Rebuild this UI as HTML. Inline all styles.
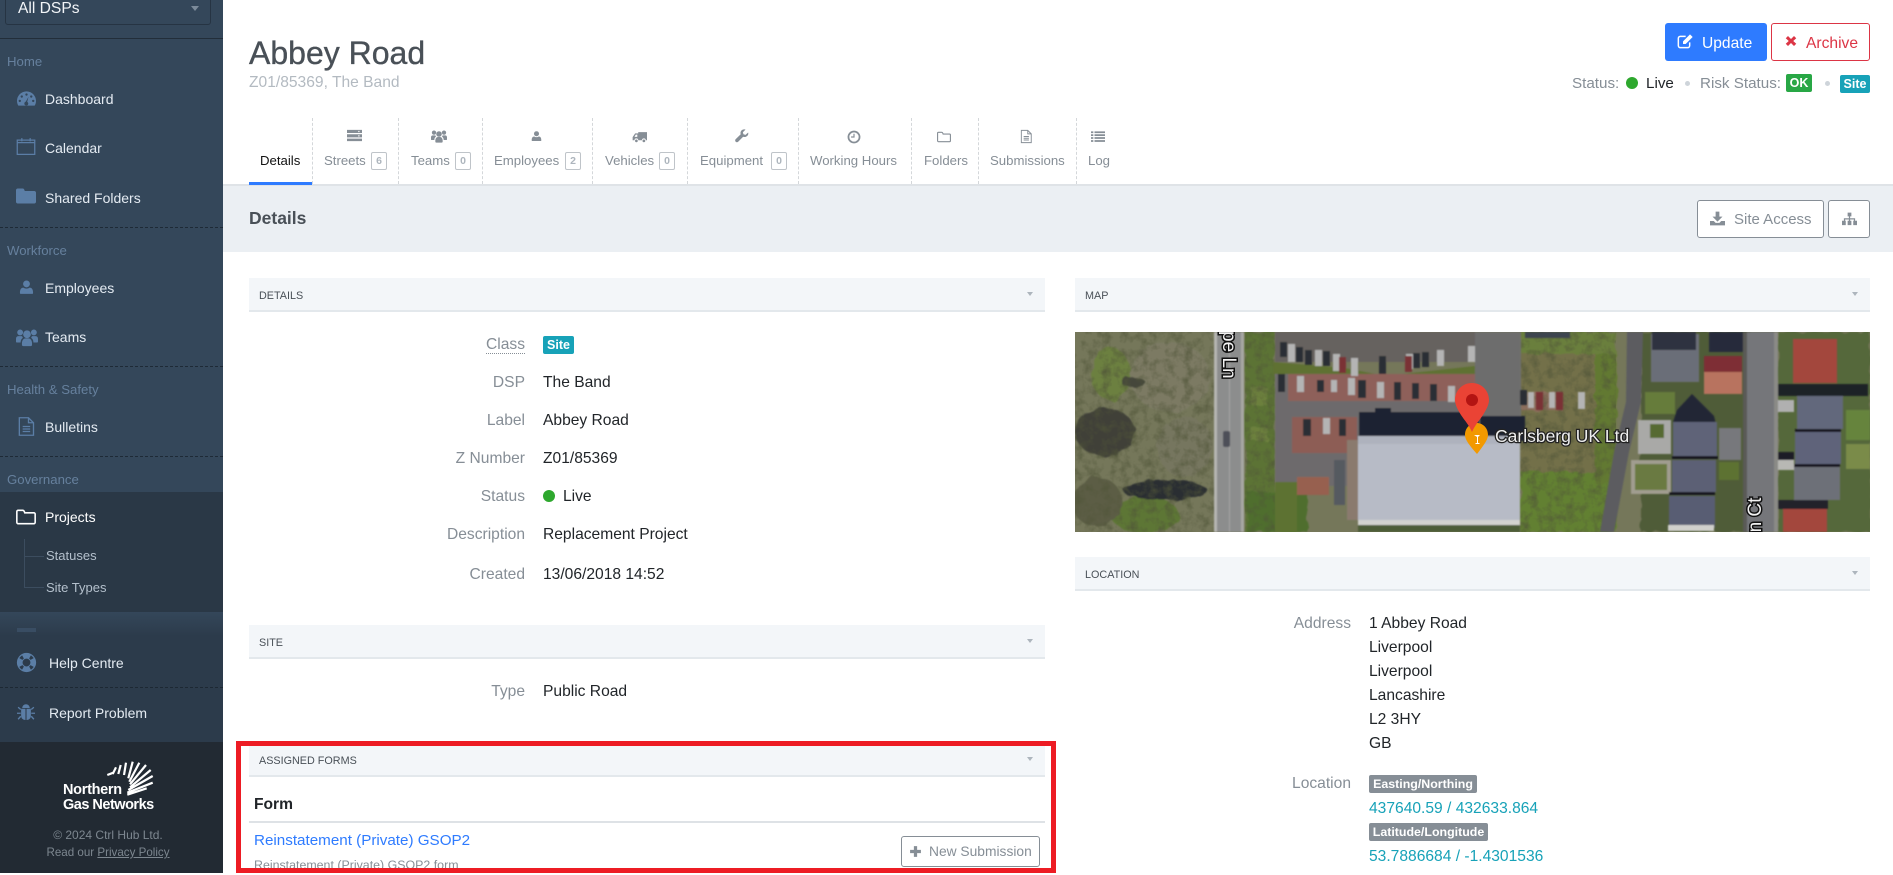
<!DOCTYPE html>
<html lang="en"><head><meta charset="utf-8"><title>Abbey Road</title>
<style>
*{box-sizing:border-box}
html,body{margin:0;padding:0;width:1893px;height:873px;overflow:hidden;background:#fff;font-family:"Liberation Sans",sans-serif}
.t{position:absolute;white-space:nowrap;line-height:20px;height:20px}
.a{position:absolute}
#side{position:absolute;left:0;top:0;width:223px;height:873px;background:#34475a;overflow:hidden}
.sec{color:#66809d;font-size:13.2px;left:7px}
.mi{color:#e4ebf2;font-size:14px;left:45px}
.sub{color:#b4c0cc;font-size:13px;left:46px}
.si{position:absolute;fill:#5b7ea6}
.dash{position:absolute;left:0;width:223px;border-top:1px dashed #1e2a36}
.tab{font-size:13.2px;color:#868e96;top:151px}
.cnt{position:absolute;top:152px;width:16px;height:18px;border:1px solid #bfc4c9;border-radius:2px;font-size:10.5px;font-weight:bold;color:#adb5bd;text-align:center;line-height:16px}
.sep{position:absolute;top:118px;height:66px;border-left:1px dashed #d4d7da}
.ti{position:absolute;fill:#868e96}
.ph{position:absolute;height:34px;background:#f3f6f9;border-bottom:2px solid #e3e8ec;font-size:10.8px;color:#495057;line-height:36px;padding-left:10px}
.ph i{position:absolute;right:12px;top:14px;width:0;height:0;border:3.500px solid transparent;border-top:4.500px solid #adb5bd;border-bottom:0}
.l{font-size:15.6px;color:#868e96;text-align:right}
.v{font-size:15.6px;color:#212529}
.bd{position:absolute;color:#fff;font-weight:bold;border-radius:2px;text-align:center}
.btn{position:absolute;border-radius:3px;font-size:15.6px;line-height:36px;height:38px}
</style></head><body>
<svg width="0" height="0" style="position:absolute"><defs>
<symbol id="gauge" viewBox="0 0 24 24"><path fill-rule="evenodd" d="M12 3C5.4 3 0 8.4 0 15c0 2.3.6 4.3 1.700 6h20.600c1.100-1.700 1.700-3.700 1.700-6C24 8.400 18.600 3 12 3zM12 5.500a1.500 1.500 0 1 1 0 3 1.500 1.500 0 0 1 0-3zM6 8a1.500 1.500 0 1 1 0 3 1.500 1.500 0 0 1 0-3zM18 8a1.500 1.500 0 1 1 0 3 1.500 1.500 0 0 1 0-3zM3.500 13.500a1.500 1.500 0 1 1 0 3 1.500 1.500 0 0 1 0-3zM20.500 13.500a1.500 1.500 0 1 1 0 3 1.500 1.500 0 0 1 0-3zM14.500 10l-1.600 6.200a2.500 2.500 0 1 1-1.800-.2z"/></symbol>
<symbol id="cal" viewBox="0 0 24 24"><path fill="none" stroke="currentColor" stroke-width="1.500" d="M1.500 5h21v17h-21zM1.500 8h21M7 2.500v4M17 2.500v4"/></symbol>
<symbol id="folder" viewBox="0 0 24 24"><path d="M2 3h6c1 0 1.500.5 2 1.500L10.500 6H22c1 0 2 1 2 2v11c0 1-1 2-2 2H2c-1 0-2-1-2-2V5c0-1 1-2 2-2z"/></symbol>
<symbol id="folderO" viewBox="0 0 24 24"><path fill="none" stroke="currentColor" stroke-width="1.900" d="M2.500 4h5.500c1 0 1.500.5 2 1.500l.5 1.500h11c.8 0 1.500.7 1.500 1.500v10c0 .8-.7 1.500-1.500 1.500h-19c-.8 0-1.500-.7-1.500-1.500v-13c0-.8.700-1.500 1.500-1.500z"/></symbol>
<symbol id="user" viewBox="0 0 24 24"><circle cx="12" cy="7" r="5.500"/><path d="M3 23c-1 0-1.500-.6-1.500-1.500 0-5 1.500-8.500 5.500-8.500 1.500 1 3 1.500 5 1.500s3.500-.5 5-1.500c4 0 5.500 3.500 5.500 8.500 0 .9-.5 1.500-1.500 1.500z"/></symbol>
<symbol id="users" viewBox="0 0 24 24"><circle cx="4.500" cy="7" r="3.200"/><circle cx="19.500" cy="7" r="3.200"/><circle cx="12" cy="9" r="4.200"/><path d="M0 17v-3c0-2 1-3 3-3h3c1 0 1 1 1.500 2-1.500 1-2.500 2.500-2.500 5H1c-.6 0-1-.4-1-1zM24 17v-3c0-2-1-3-3-3h-3c-1 0-1 1-1.500 2 1.500 1 2.500 2.500 2.500 5h4c.6 0 1-.4 1-1zM6.500 19c0-3 1.500-5.500 4-5.500h3c2.500 0 4 2.500 4 5.500v1.500c0 1-.5 1.500-1.500 1.500H8c-1 0-1.500-.5-1.500-1.500z"/></symbol>
<symbol id="file" viewBox="0 0 24 24"><path fill="none" stroke="currentColor" stroke-width="1.600" d="M4 1.500h11l6 6V22.500H4zM15 1.500v6h6M8 12h9M8 15h9M8 18h9"/></symbol>
<symbol id="ring" viewBox="0 0 24 24"><path fill-rule="evenodd" d="M12 1a11 11 0 1 0 0 22 11 11 0 0 0 0-22zM12 7.500a4.500 4.500 0 1 1 0 9 4.500 4.500 0 0 1 0-9zM7 3.800l2 3.600c-.7.500-1.200 1-1.600 1.600L3.800 7c.8-1.300 1.900-2.400 3.200-3.200zM17 3.800c1.300.8 2.400 1.900 3.200 3.200l-3.600 2c-.4-.6-.9-1.100-1.600-1.600zM3.800 17l3.600-2c.4.600.9 1.100 1.600 1.600l-2 3.600c-1.300-.8-2.400-1.900-3.200-3.200zM20.200 17c-.8 1.300-1.900 2.400-3.200 3.200l-2-3.600c.7-.5 1.200-1 1.600-1.600z"/></symbol>
<symbol id="bug" viewBox="0 0 24 24"><path d="M7 6c0-3 2.500-5 5-5s5 2 5 5zM5.500 7h5.800v15c-3 0-5.800-2-5.800-5.500zM18.500 7h-5.800v15c3 0 5.800-2 5.800-5.500z"/><path stroke="currentColor" stroke-width="1.800" fill="none" d="M5 8L1.500 5M19 8l3.500-3M5 13H0M19 13h5M5 17l-3.500 4M19 17l3.500 4"/></symbol>
<symbol id="server" viewBox="0 0 24 24"><path fill-rule="evenodd" d="M0 3h24v5H0zM0 10h24v5H0zM0 17h24v4H0zM18 4.500v2h2v-2zM18 11.500v2h2v-2z"/></symbol>
<symbol id="truck" viewBox="0 0 24 24"><path d="M10 5h14v13h-2a3 3 0 0 0-6 0h-6a3 3 0 0 0-6 0H1v-5l4-6h5zM4 12.500h4.500V9H6z"/><circle cx="7" cy="19" r="2.200"/><circle cx="19" cy="19" r="2.200"/></symbol>
<symbol id="wrench" viewBox="0 0 24 24"><path d="M22.500 6l-4.500 4-3.500-1-1-3.500L18 1c-3-1-6.500 0-8 3-.8 1.700-.8 3.300-.2 5L1 17.500C0 18.700 0 20.500 1.200 21.800s3 1.200 4.200 0L14 13.200c1.700.8 3.500.7 5.200-.2 3-1.500 4.200-4 3.300-7z"/></symbol>
<symbol id="clock" viewBox="0 0 24 24"><path fill-rule="evenodd" d="M12 1a11 11 0 1 0 0 22 11 11 0 0 0 0-22zM12 4a8 8 0 1 1 0 16 8 8 0 0 1 0-16zM11 6.500h2V13H7v-2h4z"/></symbol>
<symbol id="list" viewBox="0 0 24 24"><path d="M0 4h4v3H0zM6 4h18v3H6zM0 9h4v3H0zM6 9h18v3H6zM0 14h4v3H0zM6 14h18v3H6zM0 19h4v3H0zM6 19h18v3H6z"/></symbol>
<symbol id="edit" viewBox="0 0 24 24"><path fill="none" stroke="currentColor" stroke-width="2.200" d="M19 14v5c0 1.700-1.300 3-3 3H5c-1.700 0-3-1.300-3-3V8c0-1.700 1.300-3 3-3h8"/><path d="M9 12.500L19.500 2l4 4L13 16.500H9zM9 12.500" fill="currentColor"/></symbol>
<symbol id="x" viewBox="0 0 24 24"><path d="M6 2l6 6 6-6 4.500 4.500-6 5.500 6 5.500L18 22l-6-6-6 6-4.500-4.500 6-5.500-6-5.500z"/></symbol>
<symbol id="down" viewBox="0 0 24 24"><path d="M9 1h6v8h5l-8 8-8-8h5zM0 16h6l3 3h6l3-3h6v7H0z"/></symbol>
<symbol id="map" viewBox="0 0 24 24"><path d="M9 1h6v6h-2v3h8v4h3v7h-6v-7h1v-2h-6v2h2v7H9v-7h2v-2H5v2h1v7H0v-7h3v-4h8V7H9z"/></symbol>
<symbol id="plus" viewBox="0 0 24 24"><path d="M9 2h6v7h7v6h-7v7H9v-7H2V9h7z"/></symbol>
<filter id="soft" x="-5%" y="-5%" width="110%" height="110%"><feTurbulence type="fractalNoise" baseFrequency=".09" numOctaves="2" seed="4" result="n"/><feDisplacementMap in="SourceGraphic" in2="n" scale="7" result="d"/><feGaussianBlur in="d" stdDeviation="0.9"/></filter>
<filter id="soft2"><feGaussianBlur stdDeviation="0.9"/></filter>
<filter id="noise" x="0" y="0" width="100%" height="100%"><feTurbulence type="fractalNoise" baseFrequency=".11" numOctaves="3" seed="9"/><feColorMatrix values="0 0 0 0 .08  0 0 0 0 .09  0 0 0 0 .04  0 0 0 1.500 -.62"/></filter>
</defs></svg>

<div id="side">
  <div class="a" style="left:5px;top:-14px;width:206px;height:39px;border:1px solid #263443;border-radius:3px"></div>
  <div class="t" style="left:18px;top:-1px;color:#f2f5f8;font-size:15.6px">All DSPs</div>
  <div class="a" style="left:191px;top:6px;border:4px solid transparent;border-top:5px solid #7c8b9a;border-bottom:0"></div>
  <div class="a" style="left:0;top:38px;width:223px;height:1px;background:#222e3a"></div>

  <div class="t sec" style="top:52px">Home</div>
  <svg class="si" style="left:17px;top:89px" width="19" height="19"><use href="#gauge"/></svg><div class="t mi" style="top:89px">Dashboard</div>
  <svg class="si" style="left:16px;top:136px;color:#5b7ea6" width="20" height="20"><use href="#cal"/></svg><div class="t mi" style="top:138px">Calendar</div>
  <svg class="si" style="left:16px;top:186px" width="20" height="20"><use href="#folder"/></svg><div class="t mi" style="top:188px">Shared Folders</div>
  <div class="dash" style="top:227px"></div>
  <div class="t sec" style="top:241px">Workforce</div>
  <svg class="si" style="left:19px;top:278px" width="15" height="18"><use href="#user"/></svg><div class="t mi" style="top:278px">Employees</div>
  <svg class="si" style="left:16px;top:326px" width="22" height="22"><use href="#users"/></svg><div class="t mi" style="top:327px">Teams</div>
  <div class="dash" style="top:366px"></div>
  <div class="t sec" style="top:380px">Health &amp; Safety</div>
  <svg class="si" style="left:16px;top:416px;color:#5b7ea6" width="20" height="21"><use href="#file"/></svg><div class="t mi" style="top:417px">Bulletins</div>
  <div class="dash" style="top:456px"></div>
  <div class="t sec" style="top:470px">Governance</div>

  <div class="a" style="left:0;top:492px;width:223px;height:120px;background:#2a3846"></div>
  <svg class="a" style="left:16px;top:507px;color:#fff" width="20" height="20"><use href="#folderO"/></svg><div class="t mi" style="top:507px;color:#fff">Projects</div>
  <div class="a" style="left:24px;top:539px;width:1px;height:49px;background:#3c4d5f"></div>
  <div class="a" style="left:24px;top:556px;width:20px;height:1px;background:#3c4d5f"></div>
  <div class="a" style="left:24px;top:587px;width:20px;height:1px;background:#3c4d5f"></div>
  <div class="t sub" style="top:546px">Statuses</div>
  <div class="t sub" style="top:578px">Site Types</div>

  <div class="a" style="left:0;top:612px;width:223px;height:130px;background:linear-gradient(#34475a 0,#2c3b4b 24px,#2c3b4b 100%)"></div>
  <div class="a" style="left:17px;top:628px;width:19px;height:4px;background:#394d63"></div>
  <svg class="si" style="left:16px;top:652px" width="21" height="21"><use href="#ring"/></svg><div class="t mi" style="left:49px;top:653px">Help Centre</div>
  <div class="dash" style="top:687px;border-color:#1d2833"></div>
  <svg class="si" style="left:17px;top:703px;color:#5b7ea6" width="18" height="19"><use href="#bug"/></svg><div class="t mi" style="left:49px;top:703px">Report Problem</div>

  <div class="a" style="left:0;top:742px;width:223px;height:131px;background:#222a33"></div>
  <svg class="a" style="left:100px;top:755px" width="60" height="50" fill="none" stroke="#fff" stroke-width="2.200">
    <path d="M7.300 20L13.300 17.700M12.700 19L16 12.300M18.300 19L20.700 10M24 20L26 7.700M28.300 23.300L32.700 6.700M29.300 26.700L39.300 7.700M30 29.300L46 10M30 32.300L50.700 15M28.300 35L52.700 21M27.300 37.700L52.700 27.700M27.300 39.700L46.700 33.300"/>
  </svg>
  <div class="t" style="left:63px;top:780px;color:#fff;font-size:14.5px;font-weight:bold;letter-spacing:-.3px">Northern</div>
  <div class="t" style="left:63px;top:795px;color:#fff;font-size:14.5px;font-weight:bold;letter-spacing:-.5px">Gas Networks</div>
  <div class="t" style="left:0;width:216px;text-align:center;top:825px;color:#7d8790;font-size:12px">© 2024 Ctrl Hub Ltd.</div>
  <div class="t" style="left:0;width:216px;text-align:center;top:843px;color:#7d8790;font-size:11.600px">Read our <span style="text-decoration:underline">Privacy Policy</span></div>
</div>

<!-- header -->
<div class="t" style="left:249px;top:35px;height:36px;line-height:36px;font-size:32px;color:#495057;-webkit-text-stroke:.35px #495057">Abbey Road</div>
<div class="t" style="left:249px;top:73px;font-size:15.600px;color:#b3bac1">Z01/85369, The Band</div>

<div class="btn" style="left:1665px;top:23px;width:102px;background:#2e7bff;color:#fff;padding-left:37px;line-height:41px"><svg class="a" style="left:12px;top:10px;color:#fff;fill:#fff" width="16" height="16"><use href="#edit"/></svg>Update</div>
<div class="btn" style="left:1771px;top:23px;width:99px;background:#fff;border:1px solid #dc3545;color:#dc3545;padding-left:34px;line-height:39px"><svg class="a" style="left:13px;top:11px;fill:#dc3545" width="12" height="12"><use href="#x"/></svg>Archive</div>

<div class="t" style="left:1572px;top:74px;font-size:15.200px;color:#868e96">Status:</div>
<div class="a" style="left:1626px;top:77px;width:12px;height:12px;border-radius:50%;background:#2ea82e"></div>
<div class="t" style="left:1646px;top:74px;font-size:15.200px;color:#212529">Live</div>
<div class="a" style="left:1685px;top:81px;width:5px;height:5px;border-radius:50%;background:#ced4da"></div>
<div class="t" style="left:1700px;top:74px;font-size:15.200px;color:#868e96">Risk Status:</div>
<div class="bd" style="left:1786px;top:74px;width:26px;height:18px;background:#28a745;font-size:12.500px;line-height:18px">OK</div>
<div class="a" style="left:1825px;top:81px;width:5px;height:5px;border-radius:50%;background:#ced4da"></div>
<div class="bd" style="left:1840px;top:75px;width:30px;height:18px;background:#17a2b8;font-size:12.500px;line-height:19px">Site</div>

<!-- tabs -->
<div class="sep" style="left:312px"></div><div class="sep" style="left:398px"></div><div class="sep" style="left:482px"></div><div class="sep" style="left:592px"></div><div class="sep" style="left:687px"></div><div class="sep" style="left:798px"></div><div class="sep" style="left:911px"></div><div class="sep" style="left:978px"></div><div class="sep" style="left:1076px"></div>
<div class="t tab" style="left:260px;color:#111">Details</div>
<svg class="ti" style="left:347px;top:128px" width="15" height="15"><use href="#server"/></svg>
<div class="t tab" style="left:324px">Streets</div><div class="cnt" style="left:371px">6</div>
<svg class="ti" style="left:431px;top:128px" width="16" height="16"><use href="#users"/></svg>
<div class="t tab" style="left:411px">Teams</div><div class="cnt" style="left:455px">0</div>
<svg class="ti" style="left:531px;top:129px" width="11" height="14"><use href="#user"/></svg>
<div class="t tab" style="left:494px">Employees</div><div class="cnt" style="left:565px">2</div>
<svg class="ti" style="left:632px;top:129px" width="15" height="15"><use href="#truck"/></svg>
<div class="t tab" style="left:605px">Vehicles</div><div class="cnt" style="left:659px">0</div>
<svg class="ti" style="left:735px;top:129px" width="14" height="14"><use href="#wrench"/></svg>
<div class="t tab" style="left:700px">Equipment</div><div class="cnt" style="left:771px">0</div>
<svg class="ti" style="left:847px;top:130px" width="14" height="14"><use href="#clock"/></svg>
<div class="t tab" style="left:810px">Working Hours</div>
<svg class="a" style="left:937px;top:130px;color:#868e96" width="14" height="14"><use href="#folderO"/></svg>
<div class="t tab" style="left:924px">Folders</div>
<svg class="a" style="left:1019px;top:129px;color:#868e96" width="14" height="15"><use href="#file"/></svg>
<div class="t tab" style="left:990px">Submissions</div>
<svg class="ti" style="left:1091px;top:129px" width="14" height="14"><use href="#list"/></svg>
<div class="t tab" style="left:1088px">Log</div>

<div class="a" style="left:223px;top:184px;width:1670px;height:2px;background:#dfe3e7"></div>
<div class="a" style="left:249px;top:182px;width:63px;height:3px;background:#2e7bff"></div>
<div class="a" style="left:223px;top:186px;width:1670px;height:66px;background:#ebeff3"></div>
<div class="t" style="left:249px;top:208px;font-size:17.500px;font-weight:bold;color:#495057">Details</div>
<div class="btn" style="left:1697px;top:200px;width:127px;background:#fff;border:1px solid #868e96;color:#868e96;padding-left:36px;font-size:15px;line-height:37px"><svg class="ti" style="left:12px;top:10px" width="15" height="15"><use href="#down"/></svg>Site Access</div>
<div class="btn" style="left:1828px;top:200px;width:42px;background:#fff;border:1px solid #868e96"><svg class="ti" style="left:12px;top:11px" width="17" height="15"><use href="#map"/></svg></div>

<!-- details panel -->
<div class="ph" style="left:249px;top:278px;width:796px">DETAILS<i></i></div>
<div class="t l" style="right:1368px;top:335px;border-bottom:0"><span style="border-bottom:1px dotted #868e96">Class</span></div>
<div class="bd" style="left:543px;top:336px;width:31px;height:18px;background:#17a2b8;font-size:12.500px;line-height:19px">Site</div>
<div class="t l" style="right:1368px;top:373px">DSP</div><div class="t v" style="left:543px;top:373px">The Band</div>
<div class="t l" style="right:1368px;top:411px">Label</div><div class="t v" style="left:543px;top:411px">Abbey Road</div>
<div class="t l" style="right:1368px;top:449px">Z Number</div><div class="t v" style="left:543px;top:449px">Z01/85369</div>
<div class="t l" style="right:1368px;top:487px">Status</div><div class="a" style="left:543px;top:490px;width:12px;height:12px;border-radius:50%;background:#2ea82e"></div><div class="t v" style="left:563px;top:487px">Live</div>
<div class="t l" style="right:1368px;top:525px">Description</div><div class="t v" style="left:543px;top:525px">Replacement Project</div>
<div class="t l" style="right:1368px;top:565px">Created</div><div class="t v" style="left:543px;top:565px">13/06/2018 14:52</div>

<div class="ph" style="left:249px;top:625px;width:796px">SITE<i></i></div>
<div class="t l" style="right:1368px;top:682px">Type</div><div class="t v" style="left:543px;top:682px">Public Road</div>

<!-- assigned forms -->
<div class="ph" style="left:249px;top:743px;width:796px">ASSIGNED FORMS<i></i></div>
<div class="t" style="left:254px;top:795px;font-size:15.600px;font-weight:bold;color:#212529">Form</div>
<div class="a" style="left:249px;top:821px;width:796px;height:2px;background:#dee2e6"></div>
<div class="t" style="left:254px;top:831px;font-size:15.200px;color:#2e7bff">Reinstatement (Private) GSOP2</div>
<div class="t" style="left:254px;top:855px;font-size:12.400px;color:#868e96">Reinstatement (Private) GSOP2 form</div>
<div class="a" style="left:901px;top:836px;width:139px;height:31px;background:#fff;border:1px solid #868e96;border-radius:3px"></div>
<svg class="ti" style="left:909px;top:845px" width="13" height="13"><use href="#plus"/></svg>
<div class="t" style="left:929px;top:842px;font-size:13.800px;color:#868e96">New Submission</div>
<div class="a" style="left:236px;top:741px;width:820px;height:132px;border:5px solid #ed1c24"></div>

<!-- map -->
<div class="ph" style="left:1075px;top:278px;width:795px">MAP<i></i></div>
<svg class="a" style="left:1075px;top:332px" width="795" height="200" viewBox="0 0 795 200">
 <rect width="795" height="200" fill="#75775a"/>
 <g filter="url(#soft)">
  <ellipse cx="30" cy="100" rx="30" ry="24" fill="#3f4037"/>
  <ellipse cx="36" cy="42" rx="20" ry="26" fill="#6c8040"/>
  <ellipse cx="95" cy="45" rx="40" ry="35" fill="#7b7a64"/>
  <ellipse cx="70" cy="183" rx="34" ry="18" fill="#5d7636"/>
  <ellipse cx="90" cy="158" rx="42" ry="10" fill="#2a2f30"/>
  <ellipse cx="22" cy="170" rx="25" ry="25" fill="#5c5d44"/>
  <ellipse cx="58" cy="50" rx="12" ry="5" fill="#44473a"/>
  <ellipse cx="110" cy="115" rx="28" ry="30" fill="#76765f"/>
  <rect x="170" width="30" height="200" fill="#5c7335"/>
  <rect x="176" y="55" width="16" height="18" fill="#6c803e"/>
  <rect x="176" y="95" width="16" height="14" fill="#6c803e"/>
  <rect x="172" y="160" width="60" height="40" fill="#4f6e2e"/>
  <rect x="445" width="96" height="200" fill="#73704a"/><rect x="445" width="96" height="22" fill="#6b7f3d"/><rect x="445" y="140" width="96" height="60" fill="#628030"/><rect x="520" y="22" width="22" height="130" fill="#627932"/><rect x="445" y="60" width="42" height="18" fill="#8b6e5c"/>
  <rect x="566" width="110" height="200" fill="#4f5b37"/>
  <rect x="703" width="92" height="200" fill="#55683a"/>
 </g>
 <rect width="140" height="200" filter="url(#noise)"/>
 <rect x="170" width="30" height="200" filter="url(#noise)"/>
 <rect x="445" width="96" height="200" filter="url(#noise)"/>
 <g filter="url(#soft2)">
  <rect x="139" width="30" height="200" fill="#8c8d8d"/><rect x="139" width="3" height="200" fill="#b6b6b2"/><rect x="166" width="3" height="200" fill="#a8a8a4"/><rect x="154" width="1" height="200" fill="#a4a4a4"/>
  <rect x="148" y="99" width="7" height="16" rx="2" fill="#4d5058"/>
  <rect x="200" y="0" width="202" height="30" fill="#66625f"/>
  <path d="M198 30L270 36L310 44L400 34L400 47L300 47L198 42z" fill="#5f7133"/>
  <rect x="200" y="42" width="205" height="112" fill="#6d6b6c"/>
  <rect x="213" y="42" width="190" height="27" fill="#8e605a"/>
  <rect x="217" y="85" width="65" height="36" fill="#8d5d54"/><rect x="222" y="145" width="32" height="18" fill="#97604f"/>
  <path d="M200 150h22v50h-22z" fill="#5d7232"/>
  <rect x="284" y="80" width="120" height="28" fill="#1d2030"/><rect x="300" y="76" width="16" height="8" fill="#1d2030"/>
  <rect x="272" y="108" width="11" height="80" fill="#8a7a6e"/><rect x="259" y="128" width="11" height="45" fill="#555a60"/>
  <rect x="400" y="0" width="46" height="84" fill="#6d6d6d"/>
  <rect x="405" y="84" width="45" height="25" fill="#1f2030"/>
  <rect x="450" y="0" width="45" height="6" fill="#3e4450"/>
  <path d="M552 0h16l-2 70-12 50-15 80h-14l14-80 12-50z" fill="#5b5c60"/>
  <rect x="576" y="2" width="48" height="48" fill="#6b6e78"/><rect x="577" y="0" width="44" height="18" fill="#2d3240"/>
  <rect x="570" y="60" width="30" height="22" fill="#667b3a"/>
  <rect x="629" y="24" width="38" height="16" fill="#7e2d35"/><rect x="629" y="40" width="38" height="22" fill="#b8735f"/>
  <rect x="634" y="0" width="34" height="20" fill="#25293a"/>
  <rect x="563" y="88" width="33" height="34" fill="#a9a9a7"/><rect x="575" y="92" width="14" height="14" fill="#566b33"/>
  <rect x="556" y="128" width="40" height="34" fill="#a09d90"/><rect x="560" y="132" width="32" height="26" fill="#6a7a42"/>
  <rect x="644" y="96" width="22" height="32" fill="#77787c"/><rect x="644" y="130" width="20" height="18" fill="#5d7230"/>
  <path d="M598 90l4-12 15-16 22 22 2 8z" fill="#202536"/>
  <rect x="598" y="90" width="44" height="34" fill="#5e6378"/><rect x="597" y="124" width="46" height="3" fill="#14171f"/><rect x="597" y="128" width="44" height="32" fill="#5b6075"/><rect x="594" y="160" width="46" height="3" fill="#14171f"/><rect x="594" y="164" width="46" height="32" fill="#585d73"/><rect x="593" y="193" width="46" height="6" fill="#d0d0cc"/>
  <rect x="672" width="27" height="200" fill="#75767a"/><rect x="668" width="4" height="200" fill="#5a5a56"/><rect x="699" width="4" height="200" fill="#8a8a86"/>
  <rect x="703" y="52" width="90" height="12" fill="#1e2028"/>
  <rect x="718" y="7" width="44" height="44" fill="#a3473c"/>
  <rect x="722" y="64" width="46" height="33" fill="#62677c"/><rect x="720" y="97" width="46" height="3" fill="#15181f"/><rect x="720" y="100" width="46" height="32" fill="#5f647a"/><rect x="719" y="132" width="46" height="3" fill="#15181f"/><rect x="719" y="135" width="46" height="33" fill="#6d6f78"/>
  <rect x="771" y="78" width="24" height="30" fill="#66843c"/><rect x="771" y="112" width="24" height="25" fill="#7a8b4a"/>
  <rect x="708" y="177" width="44" height="23" fill="#a3473c"/><rect x="703" y="168" width="50" height="9" fill="#20222a"/>
  <rect x="703" y="68" width="16" height="12" fill="#b0b0b0"/><rect x="703" y="128" width="16" height="10" fill="#b8b8b4"/><rect x="703" y="120" width="16" height="8" fill="#1a1d26"/>
  <g fill="#2c2f35"><rect x="205" y="10" width="7" height="15"/><rect x="221" y="15" width="7" height="15"/><rect x="230" y="18" width="7" height="15"/><rect x="248" y="19" width="7" height="15"/><rect x="304" y="24" width="7" height="18"/><rect x="338" y="21" width="7" height="15"/><rect x="347" y="20" width="7" height="15"/><rect x="203" y="42" width="7" height="18"/><rect x="283" y="48" width="8" height="18"/><rect x="319" y="50" width="7" height="18"/><rect x="337" y="51" width="7" height="16"/><rect x="355" y="52" width="7" height="17"/><rect x="228" y="87" width="8" height="17"/><rect x="264" y="87" width="7" height="17"/><rect x="242" y="48" width="7" height="12"/><rect x="445" y="58" width="7" height="15"/></g>
  <g fill="#b4b4b4"><rect x="213" y="12" width="7" height="18"/><rect x="240" y="18" width="7" height="16"/><rect x="258" y="22" width="7" height="17"/><rect x="276" y="26" width="7" height="18"/><rect x="331" y="22" width="7" height="15"/><rect x="362" y="18" width="7" height="16"/><rect x="393" y="14" width="7" height="16"/><rect x="222" y="44" width="7" height="16"/><rect x="256" y="48" width="6" height="12"/><rect x="273" y="46" width="7" height="17"/><rect x="302" y="50" width="7" height="16"/><rect x="373" y="54" width="7" height="16"/><rect x="248" y="86" width="7" height="16"/><rect x="453" y="60" width="6" height="16"/><rect x="474" y="60" width="6" height="16"/><rect x="503" y="60" width="7" height="17"/></g>
  <g fill="#7a3036"><rect x="264" y="25" width="7" height="16"/><rect x="330" y="24" width="7" height="16"/><rect x="461" y="60" width="7" height="18"/><rect x="481" y="60" width="7" height="18"/></g>
  <rect x="283" y="104" width="162" height="84" fill="#b7bbc6"/><rect x="283" y="104" width="162" height="8" fill="#aeb2bd"/><rect x="283" y="188" width="162" height="5" fill="#d3d3d0"/><rect x="283" y="193" width="162" height="7" fill="#4e5d37"/>
 </g>
 <path d="M402 98c-7-8-12-14-12-19 0-7 5-12 11.500-12S413 72 413 79c0 5-5 11-11 19z" transform="translate(0,24)" fill="#f29900"/>
 <path d="M399 103l6 0-2 2v6h1.500v1h-4v-1h1.500v-6z" fill="#fff"/>
 <path d="M397 100c-3-7-7-11-11-17-3-5-6-10-6-15 0-9 7-17 17-17s17 8 17 17c0 5-3 10-6 15-4 6-8 10-11 17z" fill="#ea4335"/>
 <circle cx="397" cy="68" r="6" fill="#b31412"/>
 <g font-family="Liberation Sans, sans-serif">
  <text x="420" y="110" font-size="17.500" fill="#eeeeee" stroke="#222" stroke-width="2.500" paint-order="stroke">Carlsberg UK Ltd</text>
  <text transform="translate(148,-1) rotate(90)" font-size="19" fill="#f2f2f2" stroke="#111" stroke-width="3" paint-order="stroke">pe Ln</text>
  <text transform="translate(686,211) rotate(-90)" font-size="19" fill="#f2f2f2" stroke="#111" stroke-width="3" paint-order="stroke">on Ct</text>
 </g>
</svg>

<!-- location -->
<div class="ph" style="left:1075px;top:557px;width:795px">LOCATION<i></i></div>
<div class="t l" style="right:542px;top:614px">Address</div>
<div class="t v" style="left:1369px;top:614px">1 Abbey Road</div>
<div class="t v" style="left:1369px;top:638px">Liverpool</div>
<div class="t v" style="left:1369px;top:662px">Liverpool</div>
<div class="t v" style="left:1369px;top:686px">Lancashire</div>
<div class="t v" style="left:1369px;top:710px">L2 3HY</div>
<div class="t v" style="left:1369px;top:734px">GB</div>
<div class="t l" style="right:542px;top:774px">Location</div>
<div class="bd" style="left:1369px;top:775px;width:108px;height:18px;background:#868e96;font-size:12.400px;line-height:18px">Easting/Northing</div>
<div class="t v" style="left:1369px;top:799px;color:#17a2b8">437640.59 / 432633.864</div>
<div class="bd" style="left:1369px;top:823px;width:119px;height:18px;background:#868e96;font-size:12.400px;line-height:18px">Latitude/Longitude</div>
<div class="t v" style="left:1369px;top:847px;color:#17a2b8">53.7886684 / -1.4301536</div>
</body></html>
